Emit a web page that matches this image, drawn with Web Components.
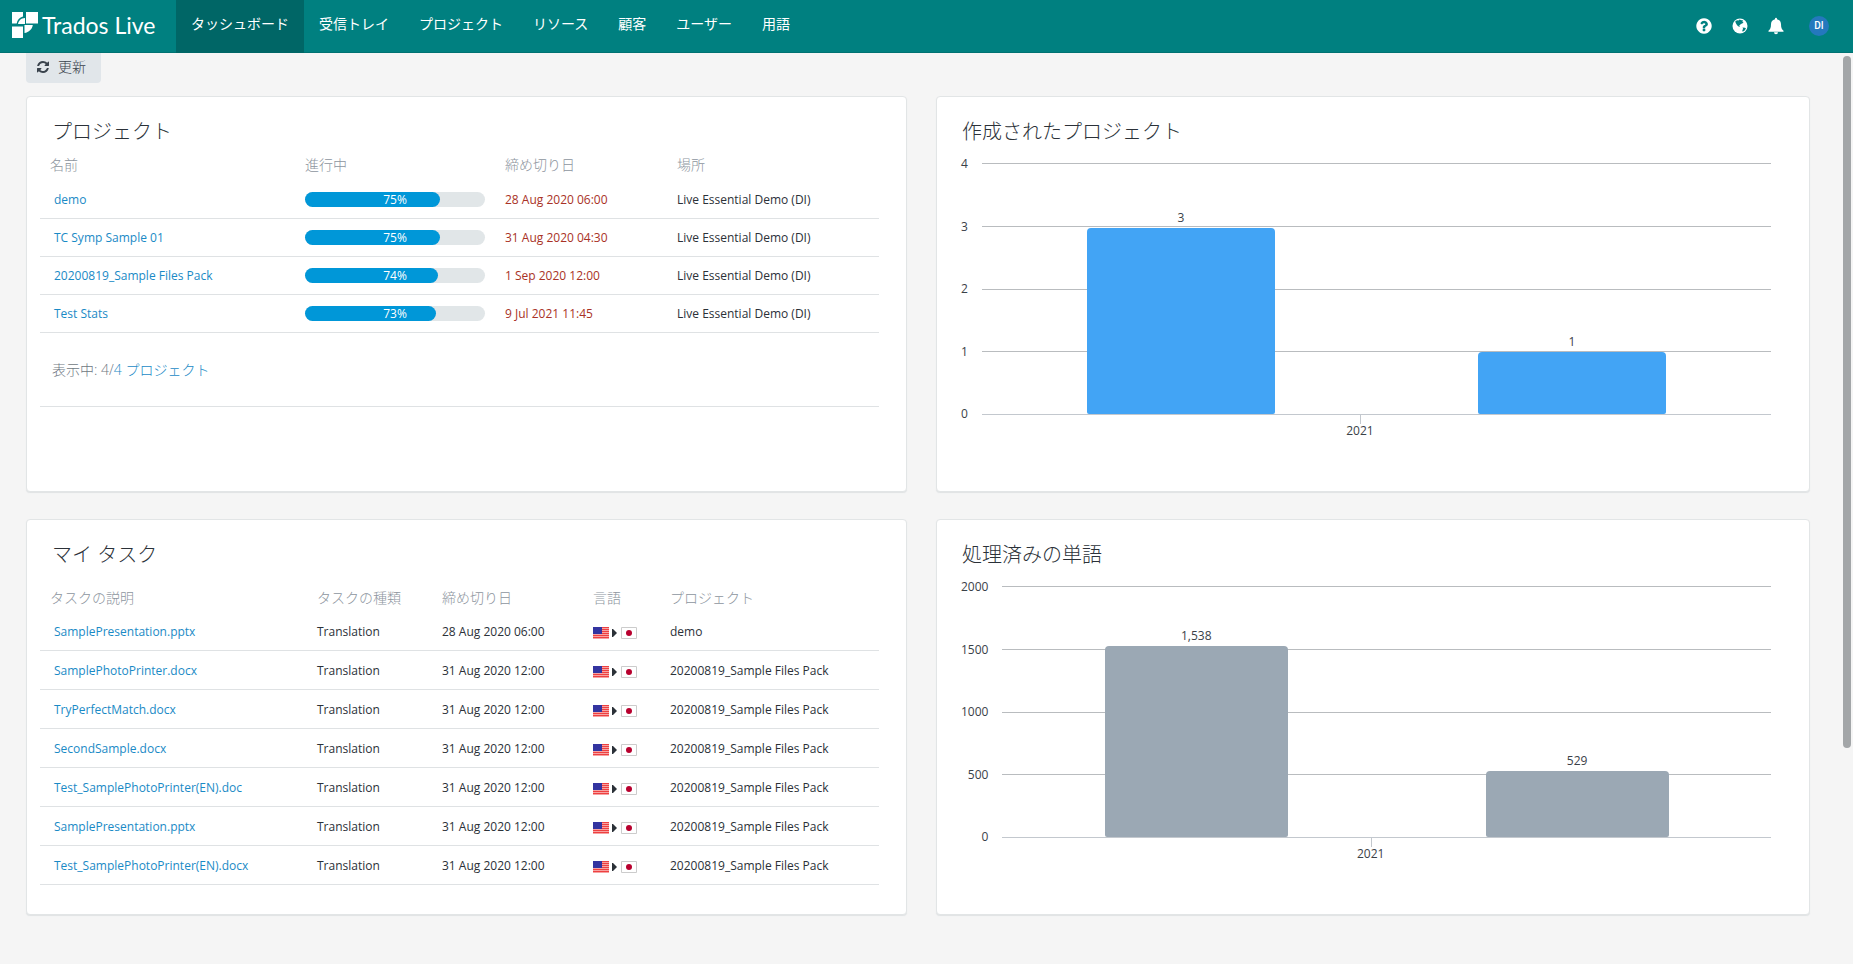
<!DOCTYPE html>
<html lang="ja">
<head>
<meta charset="utf-8">
<title>Trados Live</title>
<style>
html, body { margin: 0; height: 100%; }
body {
  background: #f5f5f5; color: #2b3138;
  font: 12px/20px "Open Sans", "Noto Sans CJK JP", sans-serif;
}
</style>
</head>
<body>
<live-app></live-app>
<script>
const shadow = (el, html) => { el.attachShadow({ mode: 'open' }).innerHTML = html; };

const HELP = '<path d="M1024 1376v-192q0-14-9-23t-23-9h-192q-14 0-23 9t-9 23v192q0 14 9 23t23 9h192q14 0 23-9t9-23zm256-672q0-88-55.5-163t-138.5-116-170-41q-243 0-371 213-15 24 8 42l132 100q7 6 19 6 16 0 25-12 53-68 86-92 34-24 86-24 48 0 85.5 26t37.5 59q0 38-20 61t-68 45q-63 28-115.5 86.5t-52.5 125.5v36q0 14 9 23t23 9h192q14 0 23-9t9-23q0-19 21.5-49.5t54.5-49.5q32-18 49-28.5t46-35 44.5-48 28-60.5 12.5-81zm384 192q0 209-103 385.5t-279.5 279.5-385.5 103-385.5-103-279.5-279.5-103-385.5 103-385.5 279.5-279.5 385.5-103 385.5 103 279.5 279.5 103 385.5z"/>';
const REFRESH = '<path d="M1639 1056q0 5-1 7-64 268-268 434.5t-478 166.5q-146 0-282.5-55t-243.5-157l-129 129q-19 19-45 19t-45-19-19-45v-448q0-26 19-45t45-19h448q26 0 45 19t19 45-19 45l-137 137q71 66 161 102t187 36q134 0 250-65t186-179q11-17 53-117 8-23 30-23h192q13 0 22.5 9.5t9.5 22.5zm25-800v448q0 26-19 45t-45 19h-448q-26 0-45-19t-19-45 19-45l138-138q-148-137-349-137-134 0-250 65t-186 179q-11 17-53 117-8 23-30 23h-199q-13 0-22.5-9.5t-9.5-22.5v-7q65-268 270-434.5t480-166.5q146 0 284 55.5t245 156.5l130-129q19-19 45-19t45 19 19 45z"/>';

customElements.define('live-header', class extends HTMLElement {
  constructor() {
    super();
    const items = ['タッシュボード', '受信トレイ', 'プロジェクト', 'リソース', '顧客', 'ユーザー', '用語'];
    shadow(this, `<style>
      :host { display: flex; height: 53px; background: #008080; color: #fff; box-shadow: inset 0 -1px #007272; }
      .brand { display: flex; align-items: center; width: 176px; box-sizing: border-box; padding: 0 0 4px 12px; gap: 4px;
        color: inherit; text-decoration: none; font: 23px/24px Lato, sans-serif; white-space: nowrap; }
      nav { display: flex; flex: 1; font-size: 14px; }
      nav a { padding: 14px 15px 19px; line-height: 20px; color: inherit; text-decoration: none; white-space: nowrap; }
      nav a.on { background: #006666; }
      .tools { display: flex; align-items: center; padding: 0 24px 2px 0; gap: 18px; }
      button { border: 0; padding: 0; background: none; color: inherit; width: 18px; height: 18px; display: block; }
      button svg { display: block; fill: currentColor; }
      .me { width: 20px; height: 20px; margin-left: 6px; border-radius: 50%; background: #2478bd; font: 500 10px/20px Roboto, sans-serif; }
    </style>
    <a class="brand" href="#">
      <svg width="26" height="26" viewBox="0 0 26 26" fill="#fff" aria-hidden="true">
        <path d="M0 0h11v4.500C7.500 5.500 5.200 8 4.700 11.500H0z"/><path d="M14 0h12v11.500H14z"/>
        <path d="M13 6v6H6C6.500 8.500 9 6.300 13 6z"/><path d="M12.500 13h8.300c-.6 4.200-4 7.400-8.300 8z"/><path d="M0 14.500h11V26H0z"/>
      </svg><span>Trados Live</span></a>
    <nav>${items.map((t, i) => `<a href="#"${i ? '' : ' class="on" aria-current="page"'}>${t}</a>`).join('')}</nav>
    <div class="tools">
      <button aria-label="ヘルプ"><svg width="18" height="18" viewBox="0 0 1792 1792">${HELP}</svg></button>
      <button aria-label="地域"><svg width="18" height="18" viewBox="0 0 18 18"><circle cx="9" cy="9" r="7.500"/><path fill="#008080" d="M4.200 4.600 6 3.200 7.500 3.400 8.600 2.600 10.500 3.300 12 3 11.200 4.400 12.600 5 11.300 6.400 9.700 7 9 8.300 8 8.600 9 10 8 9.800 6.300 8.500 5 6.500zM11.500 10.500l2.500.2 1 .8-1.600 2.300-1.800 1-.3-1.800.9-1z"/></svg></button>
      <button aria-label="通知"><svg width="18" height="18" viewBox="0 0 18 18"><path d="M8 1.800a1 1 0 0 1 2 0v.5c2.600.5 4 2.400 4 5 0 3.800 1 5.300 2.500 6.500v.9h-15v-.9C3 12.600 4 11.100 4 7.300c0-2.600 1.400-4.500 4-5zM7 15.200h4a2 2 0 0 1-4 0z"/></svg></button>
      <button class="me">DI</button>
    </div>`);
  }
});

customElements.define('live-card', class extends HTMLElement {
  constructor() {
    super();
    shadow(this, `<style>
      :host { display: block; box-sizing: border-box; min-height: 396px; padding: 20px 27px 16px 13px; background: #fff;
        border: 1px solid #e2e5e6; border-radius: 4px; box-shadow: 0 1px 1px #e0e3e4; }
      h2 { margin: 0 0 0 12px; font-size: 20px; line-height: 30px; font-weight: 300; color: #2b3138; }
    </style><h2>${this.getAttribute('heading')}</h2><slot></slot>`);
  }
});

const TABLE = `
  table { width: 100%; border-collapse: separate; border-spacing: 0; table-layout: fixed; }
  th { height: 26px; padding: 0; text-align: left; vertical-align: top; font-size: 14px; line-height: 20px; font-weight: 300; color: #8d959e; }
  td { padding: 0; border-bottom: 1px solid #dfe2e4; white-space: nowrap; }
  th:first-child { padding-left: 10px; } td:first-child { padding-left: 14px; }
  a { color: #1a8ac6; text-decoration: none; }`;

customElements.define('progress-bar', class extends HTMLElement {
  constructor() {
    super();
    const v = this.getAttribute('value');
    shadow(this, `<style>
      :host { display: block; width: 180px; border-radius: 8px; background: #e1e6e8; }
      div { width: ${v}%; border-radius: 8px; background: #0097d8; }
      span { display: block; width: 180px; text-align: center; color: #fff; line-height: 15px; }
    </style><div role="progressbar" aria-valuenow="${v}"><span>${v}%</span></div>`);
  }
});

customElements.define('project-table', class extends HTMLElement {
  constructor() {
    super();
    const rows = [['demo', 75, '28 Aug 2020 06:00'], ['TC Symp Sample 01', 75, '31 Aug 2020 04:30'],
      ['20200819_Sample Files Pack', 74, '1 Sep 2020 12:00'], ['Test Stats', 73, '9 Jul 2021 11:45']];
    shadow(this, `<style>:host { display: block; margin-top: 8px; } ${TABLE}
      td { height: 37px; } .late { color: #a93226; }
      p { margin: 0; padding: 27px 12px 26px; border-bottom: 1px solid #dfe2e4; font-size: 14px; line-height: 20px; font-weight: 300; color: #6f7882; }
    </style><table><colgroup><col width="265"><col width="200"><col width="172"><col></colgroup>
    <thead><tr><th>名前</th><th>進行中</th><th>締め切り日</th><th>場所</th></tr></thead>
    <tbody>${rows.map(r => `<tr><td><a href="#">${r[0]}</a></td><td><progress-bar value="${r[1]}"></progress-bar></td><td class="late">${r[2]}</td><td>Live Essential Demo (DI)</td></tr>`).join('')}</tbody></table>
    <p>表示中: 4/<a href="#">4 プロジェクト</a></p>`);
  }
});

customElements.define('language-pair', class extends HTMLElement {
  constructor() {
    super();
    shadow(this, `<style>:host { display: flex; align-items: center; padding-top: 2px; } svg { display: block; }</style>
    <svg width="44" height="12" viewBox="0 0 44 12" role="img" aria-label="en-US → ja-JP">
      <path fill="#f7a3a3" d="M0 0h16v12H0z"/>
      <path fill="#ee4040" d="M0 0h16v1H0zM0 2h16v1H0zM0 4h16v1H0zM0 6h16v1H0zM0 8h16v1H0zM0 10h16v1H0z"/>
      <path fill="#3334a0" d="M0 0h9v7H0z"/>
      <path fill="#2b3138" d="M19 2l1 0 4 4-4 4h-1z"/>
      <path fill="#fff" stroke="#ccc" d="M28.500.5h15v11h-15z"/><circle cx="36" cy="6" r="3" fill="#b8002e"/>
    </svg>`);
  }
});

customElements.define('task-table', class extends HTMLElement {
  constructor() {
    super();
    const names = ['SamplePresentation.pptx', 'SamplePhotoPrinter.docx', 'TryPerfectMatch.docx', 'SecondSample.docx',
      'Test_SamplePhotoPrinter(EN).doc', 'SamplePresentation.pptx', 'Test_SamplePhotoPrinter(EN).docx'];
    shadow(this, `<style>:host { display: block; margin-top: 18px; } ${TABLE} th { height: 24px; } td { height: 36px; padding-top: 2px; }</style>
    <table><colgroup><col width="277"><col width="125"><col width="151"><col width="77"><col></colgroup>
    <thead><tr><th>タスクの説明</th><th>タスクの種類</th><th>締め切り日</th><th>言語</th><th>プロジェクト</th></tr></thead>
    <tbody>${names.map((n, i) => `<tr><td><a href="#">${n}</a></td><td>Translation</td><td>${i ? '31 Aug 2020 12:00' : '28 Aug 2020 06:00'}</td><td><language-pair></language-pair></td><td>${i ? '20200819_Sample Files Pack' : 'demo'}</td></tr>`).join('')}</tbody></table>`);
  }
});

customElements.define('bar-chart', class extends HTMLElement {
  constructor() {
    super();
    const ticks = this.getAttribute('ticks').split(',').map(Number);
    const values = this.getAttribute('values').split(',').map(Number);
    const max = ticks[0];
    shadow(this, `<style>
      :host { display: grid; grid-template-columns: auto 1fr; column-gap: 14px; margin: 16px 11px 0; color: #3a4148; }
      .scale { display: flex; flex-direction: column; justify-content: space-between; margin: -9px 0; text-align: right; line-height: 20px; }
      .plot { display: grid; height: 252px; }
      .lines, .bars { grid-area: 1 / 1; }
      .lines { display: flex; flex-direction: column; border-bottom: 1px solid #c3c8ce; }
      .lines i { flex: 1; border-top: 1px solid #b9bcbf; }
      .bars { display: grid; grid-template-columns: 105fr 188fr 203fr 188fr 105fr; padding-bottom: 1px; }
      .col { display: flex; flex-direction: column; justify-content: flex-end; text-align: center; }
      .col:first-child { grid-column: 2; } .col:last-child { grid-column: 4; }
      .bar { border-radius: 4px 4px 2px 2px; background: var(--bar); }
      .axis { grid-column: 2; display: grid; grid-template-columns: 378fr 411fr; }
      .axis::after { content: ""; height: 9px; border-left: 1px solid #c3c8ce; grid-area: 1 / 2; }
      .axis span { grid-area: 2 / 2; justify-self: start; translate: -50% 0; line-height: 16px; margin-top: -1px; }
    </style>
    <div class="scale">${ticks.map(t => `<span>${t}</span>`).join('')}</div>
    <div class="plot"><div class="lines">${ticks.slice(1).map(() => '<i></i>').join('')}</div>
      <div class="bars">${values.map(v => `<div class="col"><span>${v.toLocaleString('en-US')}</span><div class="bar" style="height:${v / max * 99}%"></div></div>`).join('')}</div></div>
    <div class="axis"><span>2021</span></div>`);
  }
});

customElements.define('live-app', class extends HTMLElement {
  constructor() {
    super();
    shadow(this, `<style>
      :host { display: flex; flex-direction: column; min-height: 100vh; }
      main { position: relative; flex: 1; padding: 0 43px 48px 26px; }
      .refresh { display: flex; align-items: center; gap: 8px; height: 30px; padding: 0 15px 2px 10px; border: 0; border-radius: 0 0 4px 4px;
        background: #e1e6ea; color: #39424c; font: inherit; font-size: 14px; font-weight: 300; }
      .refresh svg { fill: currentColor; }
      .grid { display: grid; grid-template-columns: 881fr 874fr; gap: 27px 29px; margin-top: 13px; }
      .thumb { position: absolute; right: 2px; top: 3px; width: 8px; height: 76%; border-radius: 4px; background: #a3a6a8; }
    </style>
    <live-header></live-header>
    <main>
      <button class="refresh"><svg width="14" height="14" viewBox="0 0 1792 1792" aria-hidden="true">${REFRESH}</svg>更新</button>
      <div class="grid">
        <live-card heading="プロジェクト"><project-table></project-table></live-card>
        <live-card heading="作成されたプロジェクト"><bar-chart ticks="4,3,2,1,0" values="3,1" style="--bar:#42a4f5"></bar-chart></live-card>
        <live-card heading="マイ タスク"><task-table></task-table></live-card>
        <live-card heading="処理済みの単語"><bar-chart ticks="2000,1500,1000,500,0" values="1538,529" style="--bar:#9ba8b4"></bar-chart></live-card>
      </div>
      <div class="thumb"></div>
    </main>`);
  }
});
</script>
</body>
</html>
